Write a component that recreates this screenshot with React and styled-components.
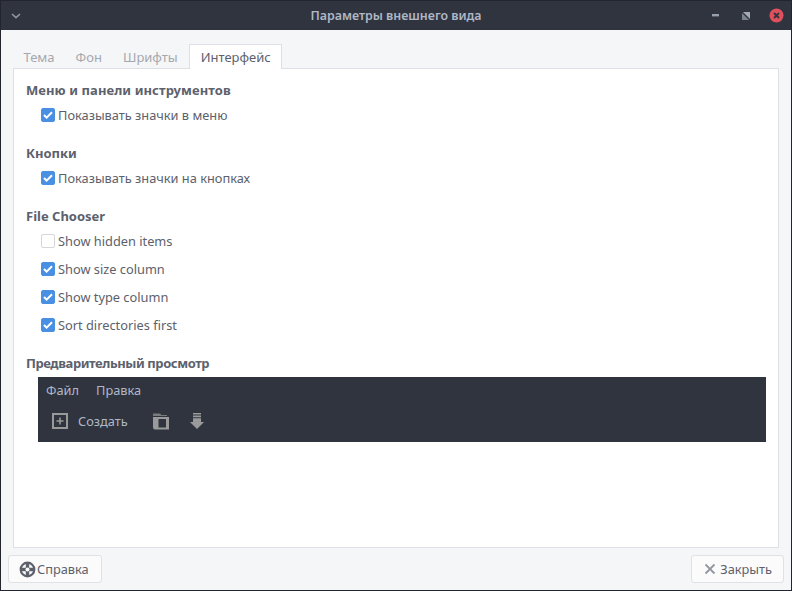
import React from 'react'
import styled, { createGlobalStyle } from 'styled-components'

const Global = createGlobalStyle`
html, body { margin: 0; padding: 0; background: #1b1d23; }
body { font-family: "Noto Sans", sans-serif; font-size: 12.8px; color: #5c616c; }
`
const Ventana = styled.div`
width: 792px;
height: 591px;
box-sizing: border-box;
padding: 0 1px 1px 1px;
display: flex;
flex-direction: column;
background: #23252e;
overflow: hidden;
`
const Titulo = styled.div`
height: 30px;
flex: none;
display: flex;
align-items: center;
justify-content: space-between;
background: #2f343f;
border-top: 1px solid #23252e;
box-sizing: border-box;
position: relative;
`
const TituloTexto = styled.div`
position: absolute;
left: 0;
right: 0;
text-align: center;
font-weight: 600;
font-size: 12.4px;
color: #afb8c6;
`
const Grupo = styled.div`
display: flex;
align-items: center;
`
const BotonVentana = styled.div`
width: ${p => p.$w || 24}px;
height: 24px;
display: flex;
align-items: center;
justify-content: center;
`
const Cuerpo = styled.div`
flex: 1;
display: flex;
flex-direction: column;
background: #f5f6f7;
padding: 14px 12px 0 12px;
min-height: 0;
`
const Tabs = styled.div`
display: flex;
height: 25px;
flex: none;
position: relative;
z-index: 1;
`
const Tab = styled.div`
box-sizing: border-box;
height: 25px;
padding: 0 10.5px;
display: flex;
align-items: center;
font-size: 13px;
color: ${p => (p.$on ? '#5c616c' : '#a5a8ae')};
${p => p.$on && `
margin-left: 1px;
background: #ffffff;
border: 1px solid #dcdfe3;
border-bottom: none;
`}
`
const Panel = styled.div`
flex: 1;
margin-top: -1px;
background: #ffffff;
border: 1px solid #dcdfe3;
box-sizing: border-box;
padding: 11px 12px 0 12px;
display: flex;
flex-direction: column;
min-height: 0;
`
const Seccion = styled.div`
font-weight: 700;
font-size: 13px;
letter-spacing: ${p => p.$sp || 0}px;
line-height: 20px;
height: 20px;
margin-bottom: 1px;
margin-top: ${p => p.$top || 0}px;
`
const Fila = styled.label`
display: flex;
align-items: center;
height: 28px;
padding-left: 15px;
gap: 3px;
`
const Caja = styled.span`
width: 14px;
height: 14px;
box-sizing: border-box;
border-radius: 2px;
display: flex;
align-items: center;
justify-content: center;
background: ${p => (p.$on ? '#4a90e2' : '#ffffff')};
border: 1px solid ${p => (p.$on ? '#4a90e2' : '#d3d6db')};
`
const Vista = styled.div`
margin: 3px 0 0 12px;
height: 65px;
background: #2f343f;
display: flex;
flex-direction: column;
`
const Menu = styled.div`
display: flex;
gap: 17px;
height: 25px;
align-items: center;
padding-left: 8px;
color: #afb8c6;
`
const Herramientas = styled.div`
display: flex;
align-items: center;
height: 38px;
padding-left: 13px;
color: #afb8c6;
`
const Crear = styled.span`
margin-left: 9px;
margin-right: 23px;
`
const Pie = styled.div`
flex: none;
height: 42px;
display: flex;
align-items: center;
justify-content: space-between;
margin: 0 -5px;
box-sizing: border-box;
`
const Boton = styled.div`
box-sizing: border-box;
height: 28px;
padding: 0 ${p => p.$der || 11}px 0 ${p => p.$izq || 10}px;
display: flex;
align-items: center;
gap: ${p => p.$gap || 2}px;
background: #fbfbfc;
border: 1px solid #dfe1e6;
border-radius: 3px;
`
const Gris = '#9a9a9a'

const Marca = () => (
  <svg width="10" height="8" viewBox="0 0 10 8">
    <path d="M1 4l2.6 2.6L9 1.2" fill="none" stroke="#fff" strokeWidth="2" />
  </svg>
)
const Opcion = ({ on, children }) => (
  <Fila>
    <Caja $on={on}>{on && <Marca />}</Caja>
    {children}
  </Fila>
)

export default function App() {
  return (
    <>
      <Global />
      <Ventana>
        <Titulo>
          <TituloTexto>Параметры внешнего вида</TituloTexto>
          <Grupo>
            <BotonVentana $w={30}>
              <svg width="10" height="6" viewBox="0 0 10 6">
                <path d="M1 1l4 3.6L9 1" fill="none" stroke="#8e96a3" strokeWidth="1.6" />
              </svg>
            </BotonVentana>
          </Grupo>
          <Grupo>
            <BotonVentana $w={30}>
              <svg width="8" height="3" viewBox="0 0 8 3"><rect width="7" height="2.4" fill="#98a0ad" /></svg>
            </BotonVentana>
            <BotonVentana $w={30}>
              <svg width="8" height="8" viewBox="0 0 8 8">
                <path d="M1 0H8V7z" fill="#a4abb6" />
                <path d="M0 1V8H7z" fill="#7c8390" />
              </svg>
            </BotonVentana>
            <BotonVentana $w={30}>
              <svg width="15" height="15" viewBox="0 0 15 15">
                <circle cx="7.5" cy="7.5" r="7" fill="#e0505c" />
                <path d="M5 5l5 5M10 5l-5 5" stroke="#2f343f" strokeWidth="1.8" />
              </svg>
            </BotonVentana>
          </Grupo>
        </Titulo>
        <Cuerpo>
          <Tabs>
            <Tab>Тема</Tab>
            <Tab>Фон</Tab>
            <Tab>Шрифты</Tab>
            <Tab $on>Интерфейс</Tab>
          </Tabs>
          <Panel>
            <Seccion $sp={0.08}>Меню и панели инструментов</Seccion>
            <Opcion on>Показывать значки в меню</Opcion>
            <Seccion $top={14}>Кнопки</Seccion>
            <Opcion on>Показывать значки на кнопках</Opcion>
            <Seccion $top={14}>File Chooser</Seccion>
            <Opcion>Show hidden items</Opcion>
            <Opcion on>Show size column</Opcion>
            <Opcion on>Show type column</Opcion>
            <Opcion on>Sort directories first</Opcion>
            <Seccion $top={14} $sp={-0.42}>Предварительный просмотр</Seccion>
            <Vista>
              <Menu>
                <span>Файл</span>
                <span>Правка</span>
              </Menu>
              <Herramientas>
                <svg width="18" height="18" viewBox="0 0 18 18">
                  <path d="M2 2h14v14H2z" fill="none" stroke={Gris} strokeWidth="2" />
                  <path d="M9 5.5v7M5.5 9h7" stroke={Gris} strokeWidth="1.6" />
                </svg>
                <Crear>Создать</Crear>
                <svg width="17" height="18" viewBox="0 0 17 18" style={{ marginLeft: 1 }}>
                  <path d="M1 1.5h7l1.5 1.5H15v1H1z" fill={Gris} opacity="0.7" />
                  <path fillRule="evenodd" d="M1 5h16v12.5H3a2 2 0 0 1-2-2zM6.5 7v8.5H14V7z" fill={Gris} />
                </svg>
                <svg width="14" height="18" viewBox="0 0 14 18" style={{ marginLeft: 21 }}>
                  <path d="M3 1h8v1.6H3zM3 3.6h8v1.6H3zM3 6.2h8V10h3l-7 7-7-7h3z" fill={Gris} />
                </svg>
              </Herramientas>
            </Vista>
          </Panel>
          <Pie>
            <Boton $izq={10} $der={12} $gap={1}>
              <svg width="17" height="17" viewBox="0 0 17 17">
                <circle cx="8.5" cy="8.5" r="6.8" fill="none" stroke="#5c616c" strokeWidth="2.2" />
                <path d="M8.5 2v13M2 8.5h13" stroke="#5c616c" strokeWidth="3.4" />
                <circle cx="8.5" cy="8.5" r="2" fill="#fbfbfc" />
              </svg>
              Справка
            </Boton>
            <Boton $izq={12} $der={11} $gap={4}>
              <svg width="12" height="12" viewBox="0 0 12 12">
                <path d="M1.5 1.5l9 9M10.5 1.5l-9 9" stroke="#93979e" strokeWidth="1.8" />
              </svg>
              Закрыть
            </Boton>
          </Pie>
        </Cuerpo>
      </Ventana>
    </>
  )
}
